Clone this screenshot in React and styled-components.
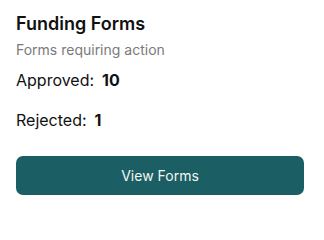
import React from 'react'
import styled, { createGlobalStyle } from 'styled-components'

const GlobalStyle = createGlobalStyle`
  body {
    margin: 0;
    background: #ffffff;
    font-family: Inter, "Noto Sans", sans-serif;
  }
`;

const Card = styled.section`
  width: 320px;
  box-sizing: border-box;
  padding: 12px 16px 16px;
  display: flex;
  flex-direction: column;
`;

const Title = styled.h2`
  margin: 0;
  font-size: 18px;
  line-height: 24px;
  font-weight: 600;
  color: #111111;
`;

const Subtitle = styled.p`
  margin: 4px 0 0;
  font-size: 14px;
  line-height: 20px;
  color: #7a7a7a;
`;

const Stats = styled.div`
  display: flex;
  flex-direction: column;
  gap: 16px;
  margin-top: 8px;
`;

const Stat = styled.div`
  font-size: 16px;
  line-height: 24px;
  color: #111111;
  b {
    font-weight: 700;
    margin-left: 8px;
  }
`;

const ViewButton = styled.button`
  margin-top: 24px;
  height: 39px;
  width: 100%;
  border: none;
  border-radius: 7px;
  background: #1b5e63;
  color: #f2f6f6;
  font-family: Inter, "Noto Sans", sans-serif;
  font-size: 14px;
  font-weight: 400;
  cursor: pointer;
`;

function App() {
  return (
    <>
      <GlobalStyle />
      <Card>
        <Title>Funding Forms</Title>
        <Subtitle>Forms requiring action</Subtitle>
        <Stats>
          <Stat>Approved:<b>10</b></Stat>
          <Stat>Rejected:<b>1</b></Stat>
        </Stats>
        <ViewButton>View Forms</ViewButton>
      </Card>
    </>
  )
}

export default App
